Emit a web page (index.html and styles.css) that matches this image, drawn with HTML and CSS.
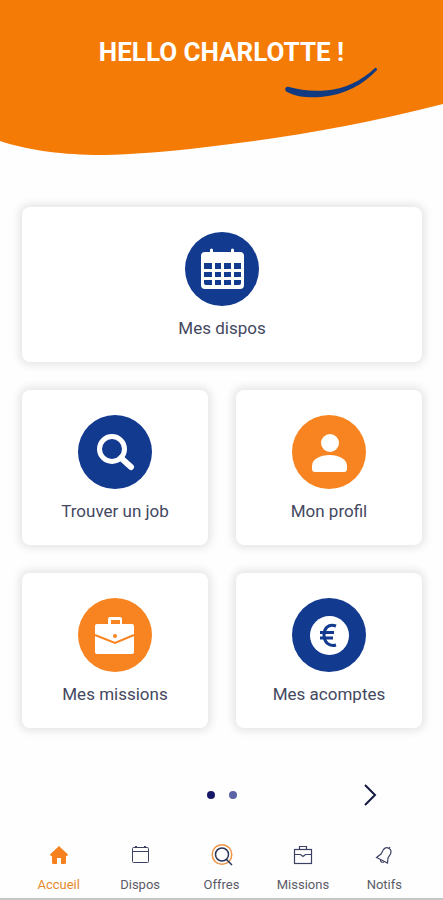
FILE: index.html
```html
<!DOCTYPE html>
<html lang="fr">
<head>
<meta charset="utf-8">
<meta name="viewport" content="width=device-width, initial-scale=1">
<title>Accueil</title>
<link rel="stylesheet" href="styles.css">
</head>
<body>
<div class="app">
  <header class="hero">
    <svg class="hero-bg" viewBox="0 0 443 156" preserveAspectRatio="none" aria-hidden="true">
      <path fill="#f47b05" d="M0 0H443V104C350 128 270 140 190 149C150 153 120 155 94 155C55 154 28 150 0 141Z"/>
    </svg>
    <h1 class="hero-title">HELLO CHARLOTTE !</h1>
    <svg class="smile" viewBox="0 0 94 32" aria-hidden="true">
      <path fill="#123a80" d="M4 20C0 19 -1 23 2 25C12 30 24 31 36 30C60 28 79 17 92 3Q92 0 90 1C76 14 60 22 40 23.500C26 24.500 15 23 4 20Z"/>
    </svg>
  </header>

  <main class="cards">
    <a class="card card-wide" href="#dispos">
      <svg class="card-icon" viewBox="0 0 74 74" aria-hidden="true">
        <circle cx="37" cy="37" r="37" fill="#123a8f"/>
        <path fill="#fff" d="M20 20H25V18a1.500 1.500 0 0 1 3 0V20H46V18a1.500 1.500 0 0 1 3 0V20H55a4 4 0 0 1 4 4V53a4 4 0 0 1-4 4H20a4 4 0 0 1-4-4V24a4 4 0 0 1 4-4Z"/>
        <path fill="#123a8f" d="M19 31h8v6h-8zM30 31h6v6h-6zM39 31h7v6h-7zM49 31h7v6h-7zM19 40h8v5h-8zM30 40h6v5h-6zM39 40h7v5h-7zM49 40h7v5h-7zM19 48h8v5h-6q-2 0-2-2zM30 48h6v5h-6zM39 48h7v5h-7zM49 48h7v3q0 2-2 2h-5z"/>
      </svg>
      <span class="card-label">Mes dispos</span>
    </a>
    <a class="card" href="#job">
      <svg class="card-icon" viewBox="0 0 74 74" aria-hidden="true">
        <circle cx="37" cy="37" r="37" fill="#123a8f"/>
        <circle cx="34" cy="34" r="12.500" fill="none" stroke="#fff" stroke-width="5"/>
        <path d="M43 43L53 52" fill="none" stroke="#fff" stroke-width="6" stroke-linecap="round"/>
      </svg>
      <span class="card-label">Trouver un job</span>
    </a>
    <a class="card" href="#profil">
      <svg class="card-icon" viewBox="0 0 74 74" aria-hidden="true">
        <circle cx="37" cy="37" r="37" fill="#f78420"/>
        <circle cx="38" cy="28" r="9" fill="#fff"/>
        <path fill="#fff" d="M20 54V51C20 44 28 40 37.500 40S55 44 55 51V54Q55 57 52 57H23Q20 57 20 54Z"/>
      </svg>
      <span class="card-label">Mon profil</span>
    </a>
    <a class="card" href="#missions">
      <svg class="card-icon" viewBox="0 0 74 74" aria-hidden="true">
        <circle cx="37" cy="37" r="37" fill="#f78420"/>
        <path fill="#fff" fill-rule="evenodd" d="M30 26V21Q30 19 32 19H42Q44 19 44 21V26H54Q56 26 56 28V54Q56 56 54 56H19Q17 56 17 54V28Q17 26 19 26ZM33 26H42V22H33Z"/>
        <path d="M17 37L37 45L56 37" fill="none" stroke="#f78420" stroke-width="2"/>
        <circle cx="37" cy="38" r="2" fill="#f78420"/>
      </svg>
      <span class="card-label">Mes missions</span>
    </a>
    <a class="card" href="#acomptes">
      <svg class="card-icon" viewBox="0 0 74 74" aria-hidden="true">
        <circle cx="37" cy="37" r="37" fill="#123a8f"/>
        <circle cx="37.500" cy="37.500" r="19.500" fill="#fff"/>
        <path d="M44 28C36 25 32 31 32 37C32 44 37 49 44 47M28 34.500H42M28 40H41" fill="none" stroke="#123a8f" stroke-width="3"/>
      </svg>
      <span class="card-label">Mes acomptes</span>
    </a>
  </main>

  <div class="pager">
    <div class="dots">
      <button class="dot dot-current" type="button" aria-label="Page 1"></button>
      <button class="dot" type="button" aria-label="Page 2"></button>
    </div>
    <button class="next" type="button" aria-label="Suivant">
      <svg class="next-icon" viewBox="0 0 14 22" aria-hidden="true"><path d="M2 1L12 11L2 21" fill="none" stroke="#15193f" stroke-width="2"/></svg>
    </button>
  </div>

  <nav class="tabs">
    <a class="tab tab-current" href="#accueil">
      <svg class="tab-icon" viewBox="0 0 24 24" aria-hidden="true"><path fill="#f5821f" d="M12 3L21 11.500Q21 13 19 13V19.500Q19 21 17.500 21H14V15H10V21H6.500Q5 21 5 19.500V13Q3 13 3 11.500Z"/></svg>
      <span>Accueil</span>
    </a>
    <a class="tab" href="#dispos">
      <svg class="tab-icon" viewBox="0 0 24 24" fill="none" stroke="#3c4163" aria-hidden="true"><rect x="4.500" y="4.500" width="16" height="15" rx="1"/><path d="M4 8.500H21"/><path d="M7 4H9M16 4H18" stroke-width="2"/></svg>
      <span>Dispos</span>
    </a>
    <a class="tab" href="#offres">
      <svg class="tab-icon" viewBox="0 0 24 24" fill="none" aria-hidden="true"><circle cx="12" cy="11.500" r="9.800" stroke="#ee9445" stroke-width="1.500"/><circle cx="12" cy="11.500" r="6.500" stroke="#293457" stroke-width="1.500"/><path d="M16 16L22 22" stroke="#293457" stroke-width="1.500"/></svg>
      <span>Offres</span>
    </a>
    <a class="tab" href="#missions">
      <svg class="tab-icon" viewBox="0 0 24 24" fill="none" stroke="#3c4163" stroke-width="1.200" aria-hidden="true"><rect x="3.500" y="6.500" width="17" height="14"/><path d="M8.500 6V3.500H15.500V6M3.500 11.500H9.500L12 13.500L14.500 11.500H20.500"/></svg>
      <span>Missions</span>
    </a>
    <a class="tab" href="#notifs">
      <svg class="tab-icon" viewBox="0 0 24 24" fill="none" stroke="#3c4163" stroke-width="1.200" aria-hidden="true"><path d="M4.500 14.500L9 11L11.500 6.500Q14 3.500 17 5.500Q20 7 18.500 11L16 15L15.500 20Z"/><path d="M17 5.500L18 4M8.500 17Q8.500 20 12 19"/></svg>
      <span>Notifs</span>
    </a>
  </nav>
</div>
</body>
</html>
```
FILE: styles.css
```css
* {
  box-sizing: border-box;
}

body {
  margin: 0;
  background: #fefefe;
  color: #44485f;
  font-family: Roboto, "Liberation Sans", sans-serif;
}

a {
  color: inherit;
  text-decoration: none;
}

button {
  padding: 0;
  border: 0;
  background: none;
  cursor: pointer;
}

.app {
  display: flex;
  flex-direction: column;
  min-height: 100vh;
  border-bottom: 2px solid #c6c6c6;
}

.hero {
  position: relative;
  padding: 36px 20px 88px;
}

.hero-bg {
  position: absolute;
  inset: 0;
  width: 100%;
  height: 100%;
}

.hero-title {
  position: relative;
  margin: 0;
  color: #fff;
  font-size: 26px;
  font-weight: 700;
  line-height: 32px;
  text-align: center;
}

.smile {
  position: absolute;
  top: 67px;
  left: calc(50% + 63px);
  width: 94px;
  height: 32px;
}

.cards {
  display: grid;
  grid-template-columns: 1fr 1fr;
  gap: 28px;
  padding: 51px 21px 0 22px;
}

.card {
  display: flex;
  flex-direction: column;
  align-items: center;
  gap: 10px;
  padding: 25px 8px 22px;
  border-radius: 8px;
  background: #fff;
  box-shadow: 0 0 8px 3px rgba(0, 0, 0, 0.1);
}

.card-wide {
  grid-column: 1 / -1;
}

.card-icon {
  width: 74px;
  height: 74px;
}

.card-label {
  font-size: 17px;
  line-height: 24px;
}

.pager {
  display: grid;
  grid-template-columns: 1fr auto 1fr;
  align-items: center;
  margin-top: 56px;
  padding: 0 66px;
}

.dots {
  display: flex;
  grid-column: 2;
  gap: 14px;
}

.dot {
  width: 8px;
  height: 8px;
  border-radius: 50%;
  background: #5c64a5;
}

.dot-current {
  background: #16186a;
}

.next {
  justify-self: end;
  height: 22px;
}

.next-icon {
  display: block;
  width: 14px;
  height: 22px;
}

.tabs {
  display: flex;
  margin-top: auto;
  padding: 0 18px 5px;
}

.tab {
  display: flex;
  flex: 1;
  flex-direction: column;
  align-items: center;
  gap: 10px;
  color: #5a5b66;
  font-size: 13px;
  line-height: 16px;
}

.tab-current {
  color: #e58a2c;
}

.tab-icon {
  width: 24px;
  height: 24px;
}
```
